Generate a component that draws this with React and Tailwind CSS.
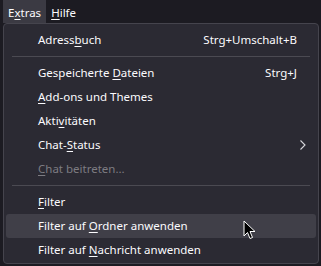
import React from "react";

const U = ({ children }) => <span className="underline underline-offset-2">{children}</span>;

function Row({ label, shortcut, arrow, disabled, hover }) {
  return (
    <div
      className={`flex items-center h-6 pl-[32px] pr-[19px] mx-[2px] rounded-[3px] ${hover ? "bg-[#403f48]" : ""} ${disabled ? "text-[#7d7c82]" : "text-[#fbfbfe]"}`}
    >
      <span className="flex-1">{label}</span>
      {shortcut && <span className="text-[#fbfbfe]">{shortcut}</span>}
      {arrow && (
        <svg width="8" height="12" viewBox="0 0 8 12" className="mr-[-10px]">
          <path d="M1.5 1.5 L6 6 L1.5 10.5" fill="none" stroke="#d8d8dc" strokeWidth="1.1" />
        </svg>
      )}
    </div>
  );
}

function Sep() {
  return <div className="h-px bg-[#4b4a52] mx-[8px] my-[4px]" />;
}

export default function App() {
  return (
    <div
      className="w-[321px] h-[266px] bg-[#1c1b22] relative overflow-hidden text-[11.5px] leading-none"
      style={{ fontFamily: '"Noto Sans", "Open Sans", sans-serif' }}
    >
      <div className="flex h-[23px] items-stretch pl-[3px] text-[#fbfbfe]">
        <div className="pl-[5px] pr-[5px] pt-[2px] flex items-center bg-[#3b3a43]">
          <span>E<U>x</U>tras</span>
        </div>
        <div className="px-[5px] pt-[2px] flex items-center">
          <span><U>H</U>ilfe</span>
        </div>
      </div>
      <div className="absolute left-[3px] top-[23px] w-[316px] h-[241px] bg-[#2b2a33] border border-[#45444d] rounded-[4px] pt-[4px]">
        <Row label={<>Adress<U>b</U>uch</>} shortcut="Strg+Umschalt+B" />
        <Sep />
        <Row label={<>Gespeicherte <U>D</U>ateien</>} shortcut="Strg+J" />
        <Row label={<><U>A</U>dd-ons und Themes</>} />
        <Row label={<>Akti<U>v</U>itäten</>} />
        <Row label={<>Chat-<U>S</U>tatus</>} arrow />
        <Row label={<><U>C</U>hat beitreten…</>} disabled />
        <Sep />
        <Row label={<><U>F</U>ilter</>} />
        <Row label={<>Filter auf <U>O</U>rdner anwenden</>} hover />
        <Row label={<>Filter auf <U>N</U>achricht anwenden</>} />
      </div>
      <svg className="absolute left-[243px] top-[220px]" width="14" height="20" viewBox="0 0 14 20">
        <path d="M1 1 L1 16 L4.5 12.5 L7 18.5 L9.5 17.5 L7 11.5 L12 11.5 Z" fill="#000" stroke="#fff" strokeWidth="1" />
      </svg>
    </div>
  );
}
